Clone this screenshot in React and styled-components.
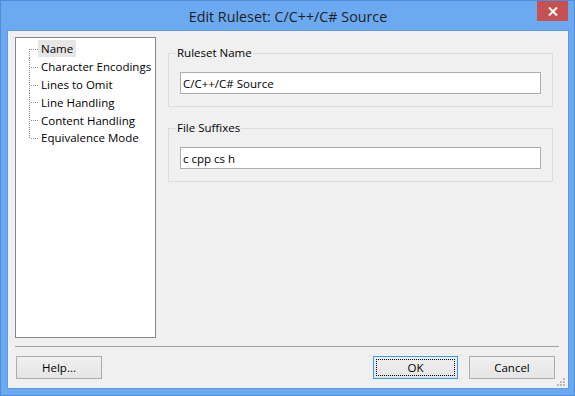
import styled, { createGlobalStyle } from 'styled-components';

const GlobalStyle = createGlobalStyle`
  html, body {
    margin: 0;
    padding: 0;
    background: #ffffff;
  }

  body {
    font-family: 'Open Sans', 'Noto Sans', sans-serif;
    font-size: 11.5px;
    color: #000;
  }

  * {
    box-sizing: border-box;
  }
`;

const treeItems = [
  'Name',
  'Character Encodings',
  'Lines to Omit',
  'Line Handling',
  'Content Handling',
  'Equivalence Mode',
];

const App = () => {
  return (
    <>
      <GlobalStyle />
      <Window>
        <TitleBar>
          <span />
          <Title>Edit Ruleset: C/C++/C# Source</Title>
          <CloseButton aria-label="Close">
            <svg width="10" height="9" viewBox="0 0 10 9">
              <path d="M1 0.5 L9 8.5 M9 0.5 L1 8.5" stroke="#fff" strokeWidth="2" />
            </svg>
          </CloseButton>
        </TitleBar>

        <Client>
          <Body>
            <Tree>
              {treeItems.map((item, i) => (
                <TreeRow key={item}>
                  <svg width="9" height="18" viewBox="0 0 9 18" shapeRendering="crispEdges">
                    <line
                      x1="0.5"
                      y1={i === 0 ? 9 : 0}
                      x2="0.5"
                      y2={i === treeItems.length - 1 ? 10 : 18}
                      stroke="#8a8a8a"
                      strokeDasharray="1 1"
                    />
                    <line x1="2" y1="9.5" x2="9" y2="9.5" stroke="#8a8a8a" strokeDasharray="1 1" />
                  </svg>
                  <TreeLabel $selected={i === 0}>{item}</TreeLabel>
                </TreeRow>
              ))}
            </Tree>

            <Panel>
              <Group>
                <Legend>Ruleset Name</Legend>
                <TextInput defaultValue="C/C++/C# Source" />
              </Group>
              <Group>
                <Legend>File Suffixes</Legend>
                <TextInput defaultValue="c cpp cs h" />
              </Group>
            </Panel>
          </Body>

          <Separator />

          <ButtonRow>
            <Button>Help...</Button>
            <Spacer />
            <Button $default $width={85}>OK</Button>
            <Button>Cancel</Button>
          </ButtonRow>

          <Grip>
            <svg width="8" height="8" viewBox="0 0 8 8">
              <rect x="6" y="0" width="2" height="2" fill="#b9b9b9" />
              <rect x="3" y="3" width="2" height="2" fill="#b9b9b9" />
              <rect x="6" y="3" width="2" height="2" fill="#b9b9b9" />
              <rect x="0" y="6" width="2" height="2" fill="#b9b9b9" />
              <rect x="3" y="6" width="2" height="2" fill="#b9b9b9" />
              <rect x="6" y="6" width="2" height="2" fill="#b9b9b9" />
            </svg>
          </Grip>
        </Client>
      </Window>
    </>
  );
};

const Window = styled.div`
  width: 575px;
  height: 396px;
  display: flex;
  flex-direction: column;
  border: 1px solid #4f8ddb;
  background-color: #6ba9f0;
  padding: 0 6px 7px 7px;
`;

const TitleBar = styled.div`
  height: 30px;
  display: grid;
  grid-template-columns: 1fr auto 1fr;
  align-items: center;
`;

const Title = styled.div`
  font-size: 14.3px;
  color: #1f1f1f;
  white-space: nowrap;
  padding-top: 1px;
`;

const CloseButton = styled.div`
  justify-self: end;
  align-self: start;
  width: 31px;
  height: 20px;
  background-color: #c75050;
  display: flex;
  align-items: center;
  justify-content: center;
`;

const Client = styled.div`
  position: relative;
  flex: 1;
  background-color: #f0f0f0;
  box-shadow: 0 0 0 1px #5d9be6;
  display: flex;
  flex-direction: column;
`;

const Body = styled.div`
  display: flex;
  align-items: flex-start;
  gap: 12px;
  padding: 6px 0 0 7px;
`;

const Tree = styled.div`
  width: 141px;
  height: 301px;
  background-color: #fff;
  border: 1px solid #828790;
  padding: 2px 0 0 13px;
`;

const TreeRow = styled.div`
  display: flex;
  align-items: center;
  height: 17.8px;

  svg {
    flex: none;
    height: 17.8px;
  }
`;

const TreeLabel = styled.span`
  height: 17px;
  line-height: 17px;
  padding: 0 3px;
  white-space: nowrap;
  background-color: ${(p) => (p.$selected ? '#e6e6e6' : 'transparent')};
`;

const Panel = styled.div`
  width: 385px;
  padding-top: 8px;
  display: flex;
  flex-direction: column;
  gap: 13px;
`;

const Group = styled.fieldset`
  margin: 0;
  min-width: 0;
  border: 1px solid #dcdcdc;
  padding: 0 11px 12px 7px;
`;

const Legend = styled.legend`
  padding: 0 1px;
  line-height: 16px;
  font-size: 11.5px;
`;

const TextInput = styled.input`
  display: block;
  width: 361px;
  height: 22px;
  margin: 11px 0 0 4px;
  padding: 0 2px;
  border: 1px solid #abadb3;
  background-color: #fff;
  font-family: inherit;
  font-size: 11.5px;
  color: #000;
  outline: none;
`;

const Separator = styled.div`
  height: 1px;
  margin: 8px 9px 0 7px;
  background-color: #a0a0a0;
`;

const ButtonRow = styled.div`
  display: flex;
  gap: 11px;
  margin-top: 9px;
  padding: 0 13px 0 8px;
`;

const Spacer = styled.div`
  flex: 1;
`;

const Button = styled.div`
  width: ${(p) => p.$width || 86}px;
  height: 23px;
  display: flex;
  align-items: center;
  justify-content: center;
  border: 1px solid ${(p) => (p.$default ? '#3399ff' : '#acacac')};
  background: linear-gradient(#f0f0f0, #e5e5e5);
  outline: ${(p) => (p.$default ? '1px dotted #000' : 'none')};
  outline-offset: -4px;
  font-size: 11.5px;
  padding-bottom: 1px;
`;

const Grip = styled.div`
  position: absolute;
  right: 3px;
  bottom: 2px;
  line-height: 0;
`;

export default App;
